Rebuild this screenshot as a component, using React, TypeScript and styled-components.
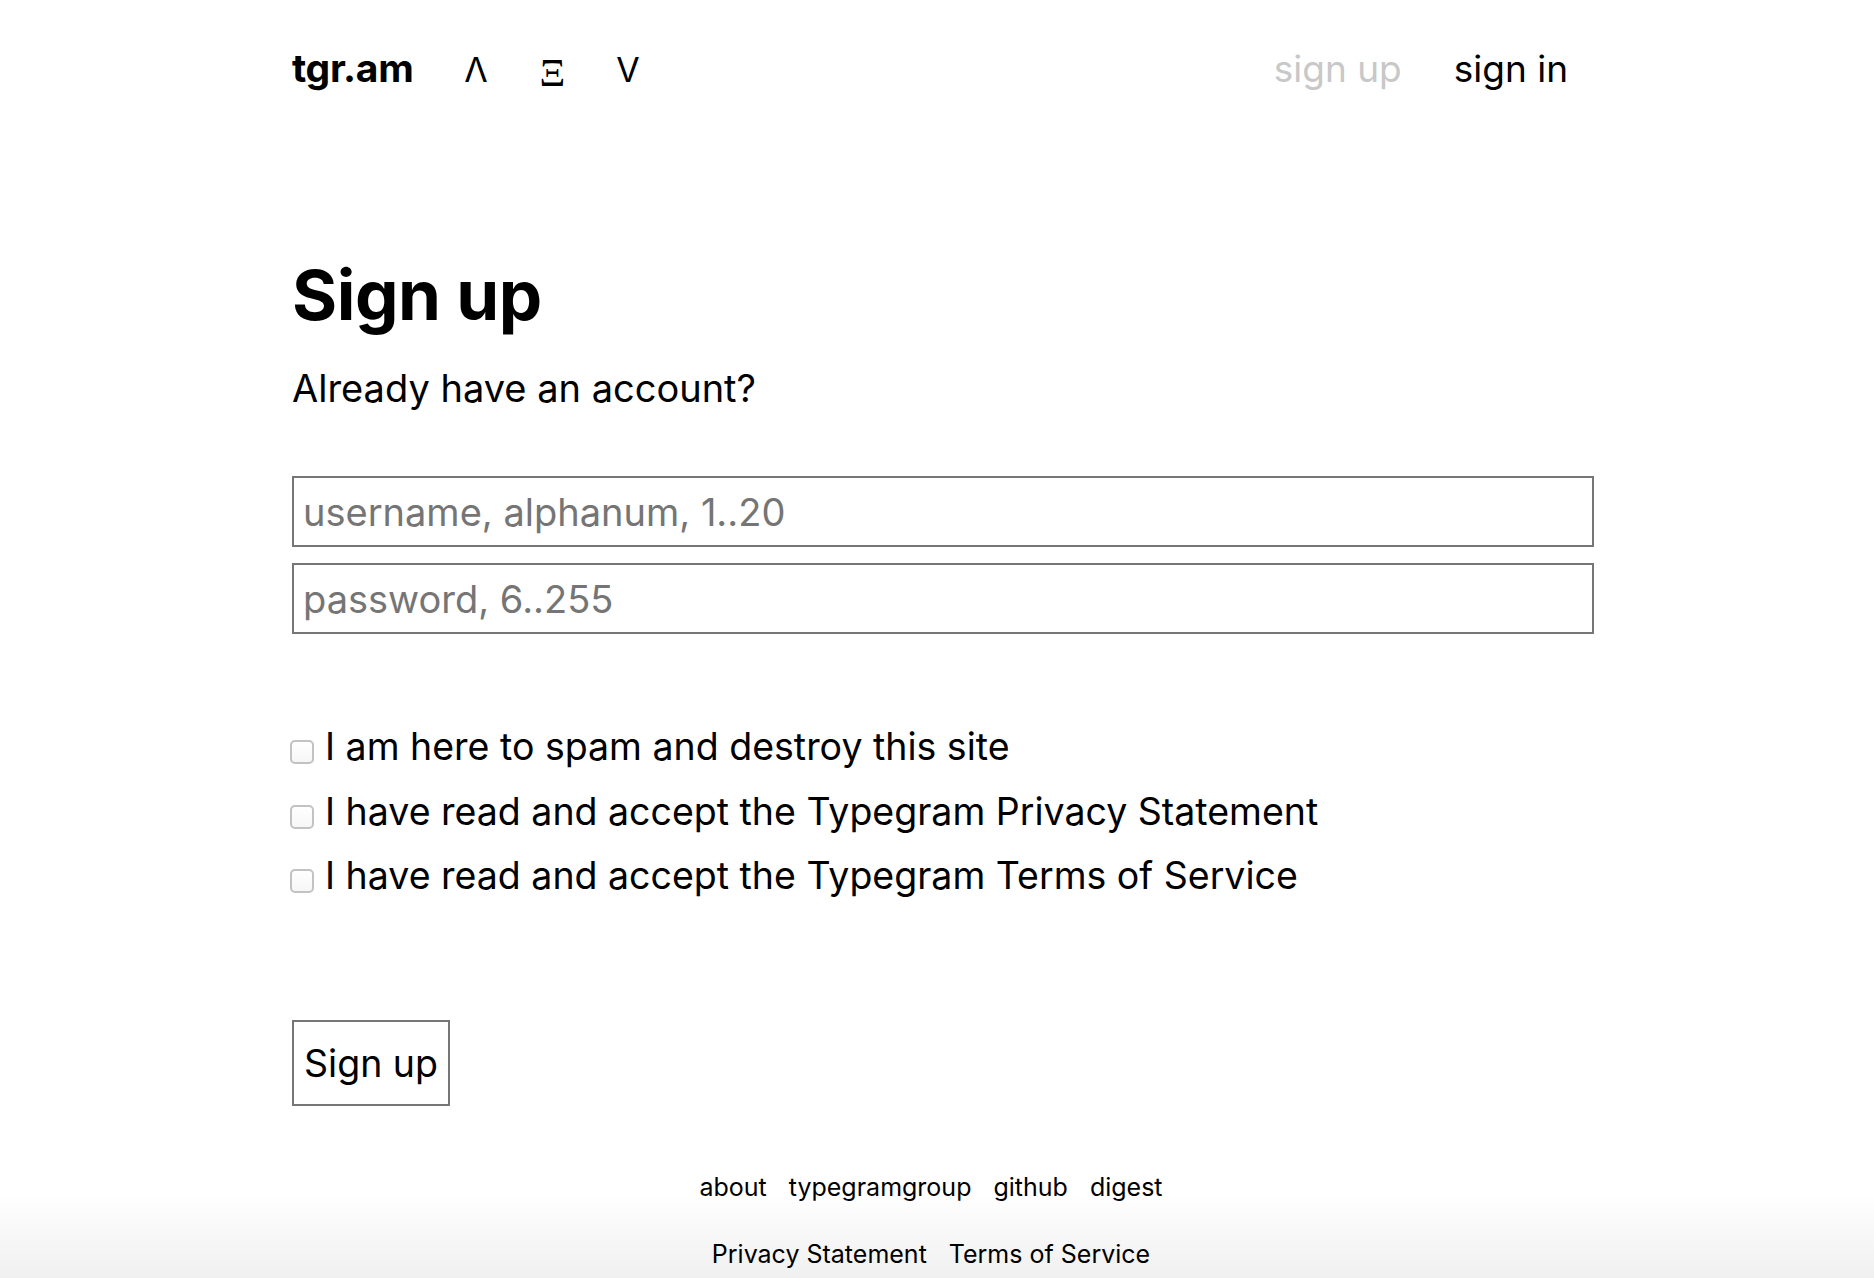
import styled, { createGlobalStyle } from 'styled-components';

const GlobalStyle = createGlobalStyle`
  html, body {
    margin: 0;
    padding: 0;
    background: #fff;
  }
  body {
    font-family: Inter, "Liberation Sans", sans-serif;
    color: #000;
  }
  * {
    box-sizing: border-box;
  }
`;

const checks = [
  'I am here to spam and destroy this site',
  'I have read and accept the Typegram Privacy Statement',
  'I have read and accept the Typegram Terms of Service',
];

const footerTop = ['about', 'typegramgroup', 'github', 'digest'];
const footerBottom = ['Privacy Statement', 'Terms of Service'];

export default function App() {
  return (
    <>
      <GlobalStyle />
      <Page>
        <Container>
          <Header>
            <Logo>tgr.am</Logo>
            <Arrows>
              <Arrow>Λ</Arrow>
              <Arrow $serif>Ξ</Arrow>
              <Arrow>V</Arrow>
            </Arrows>
            <Nav>
              <NavLink $muted>sign up</NavLink>
              <NavLink>sign in</NavLink>
            </Nav>
          </Header>

          <Title>Sign up</Title>
          <Subtitle>Already have an account?</Subtitle>

          <Fields>
            <Input type="text" placeholder="username, alphanum, 1..20" />
            <Input type="password" placeholder="password, 6..255" />
          </Fields>

          <Checks>
            {checks.map((label, idx) => (
              <CheckRow key={idx}>
                <Box type="checkbox" />
                <span>{label}</span>
              </CheckRow>
            ))}
          </Checks>

          <Submit>Sign up</Submit>
        </Container>

        <Footer>
          <FooterRow>
            {footerTop.map((l) => (
              <FooterLink key={l}>{l}</FooterLink>
            ))}
          </FooterRow>
          <FooterRow>
            {footerBottom.map((l) => (
              <FooterLink key={l}>{l}</FooterLink>
            ))}
          </FooterRow>
        </Footer>
      </Page>
    </>
  );
}

const Page = styled.div`
  min-height: 1278px;
  display: flex;
  flex-direction: column;
`;

const Container = styled.div`
  width: 1314px;
  margin: 0 auto;
  padding: 0 0 0 12px;
`;

const Header = styled.header`
  display: flex;
  align-items: baseline;
  padding-top: 44px;
  height: 110px;
`;

const Logo = styled.div`
  font-size: 39px;
  font-weight: 700;
  letter-spacing: -0.3px;
`;

const Arrows = styled.div`
  display: flex;
  gap: 51px;
  margin-left: 50px;
`;

const Arrow = styled.span<{ $serif?: boolean }>`
  font-family: ${(p) => (p.$serif ? '"Liberation Serif", serif' : 'inherit')};
  font-size: ${(p) => (p.$serif ? '40px' : '34px')};
  font-weight: 400;
  width: 25px;
  text-align: center;
`;

const Nav = styled.nav`
  margin-left: auto;
  margin-right: 26px;
  display: flex;
  gap: 52px;
`;

const NavLink = styled.a<{ $muted?: boolean }>`
  font-size: 37px;
  color: ${(p) => (p.$muted ? '#c8c8c8' : '#000')};
  cursor: pointer;
`;

const Title = styled.h1`
  margin: 144px 0 0 0;
  font-size: 69px;
  font-weight: 700;
  line-height: 1.2;
  letter-spacing: -0.5px;
`;

const Subtitle = styled.p`
  margin: 29px 0 0 0;
  font-size: 38px;
  line-height: 1.2;
`;

const Fields = styled.div`
  display: flex;
  flex-direction: column;
  gap: 16px;
  margin-top: 65px;
`;

const Input = styled.input`
  width: 100%;
  height: 71px;
  border: 2px solid #767676;
  padding: 0 9px;
  font-family: inherit;
  font-size: 38px;
  color: #000;
  outline: none;

  &::placeholder {
    color: #757575;
  }
`;

const Checks = styled.div`
  display: flex;
  flex-direction: column;
  gap: 16.5px;
  margin-top: 89px;
`;

const CheckRow = styled.label`
  display: flex;
  align-items: flex-start;
  gap: 11px;
  font-size: 37.5px;
  line-height: 48px;
`;

const Box = styled.input`
  appearance: none;
  margin: 17px 0 0 -2px;
  width: 24px;
  height: 24px;
  border: 2px solid #c2c2c2;
  border-radius: 5px;
  background: linear-gradient(#fff, #f6f6f6);
  flex-shrink: 0;
`;

const Submit = styled.button`
  display: block;
  margin-top: 120px;
  height: 86px;
  padding: 0 10px;
  border: 2px solid #767676;
  background: #fff;
  font-family: inherit;
  font-size: 37.5px;
  color: #000;
`;

const Footer = styled.footer`
  margin-top: auto;
  padding: 65px 0 9px;
  display: flex;
  flex-direction: column;
  align-items: center;
  gap: 37px;
  background: linear-gradient(#fff 0%, #fff 50%, #f0f0f0 100%);
`;

const FooterRow = styled.div`
  display: flex;
  gap: 22px;
  margin-left: -12px;
`;

const FooterLink = styled.a`
  font-size: 25px;
  line-height: 30px;
  color: #000;
`;
